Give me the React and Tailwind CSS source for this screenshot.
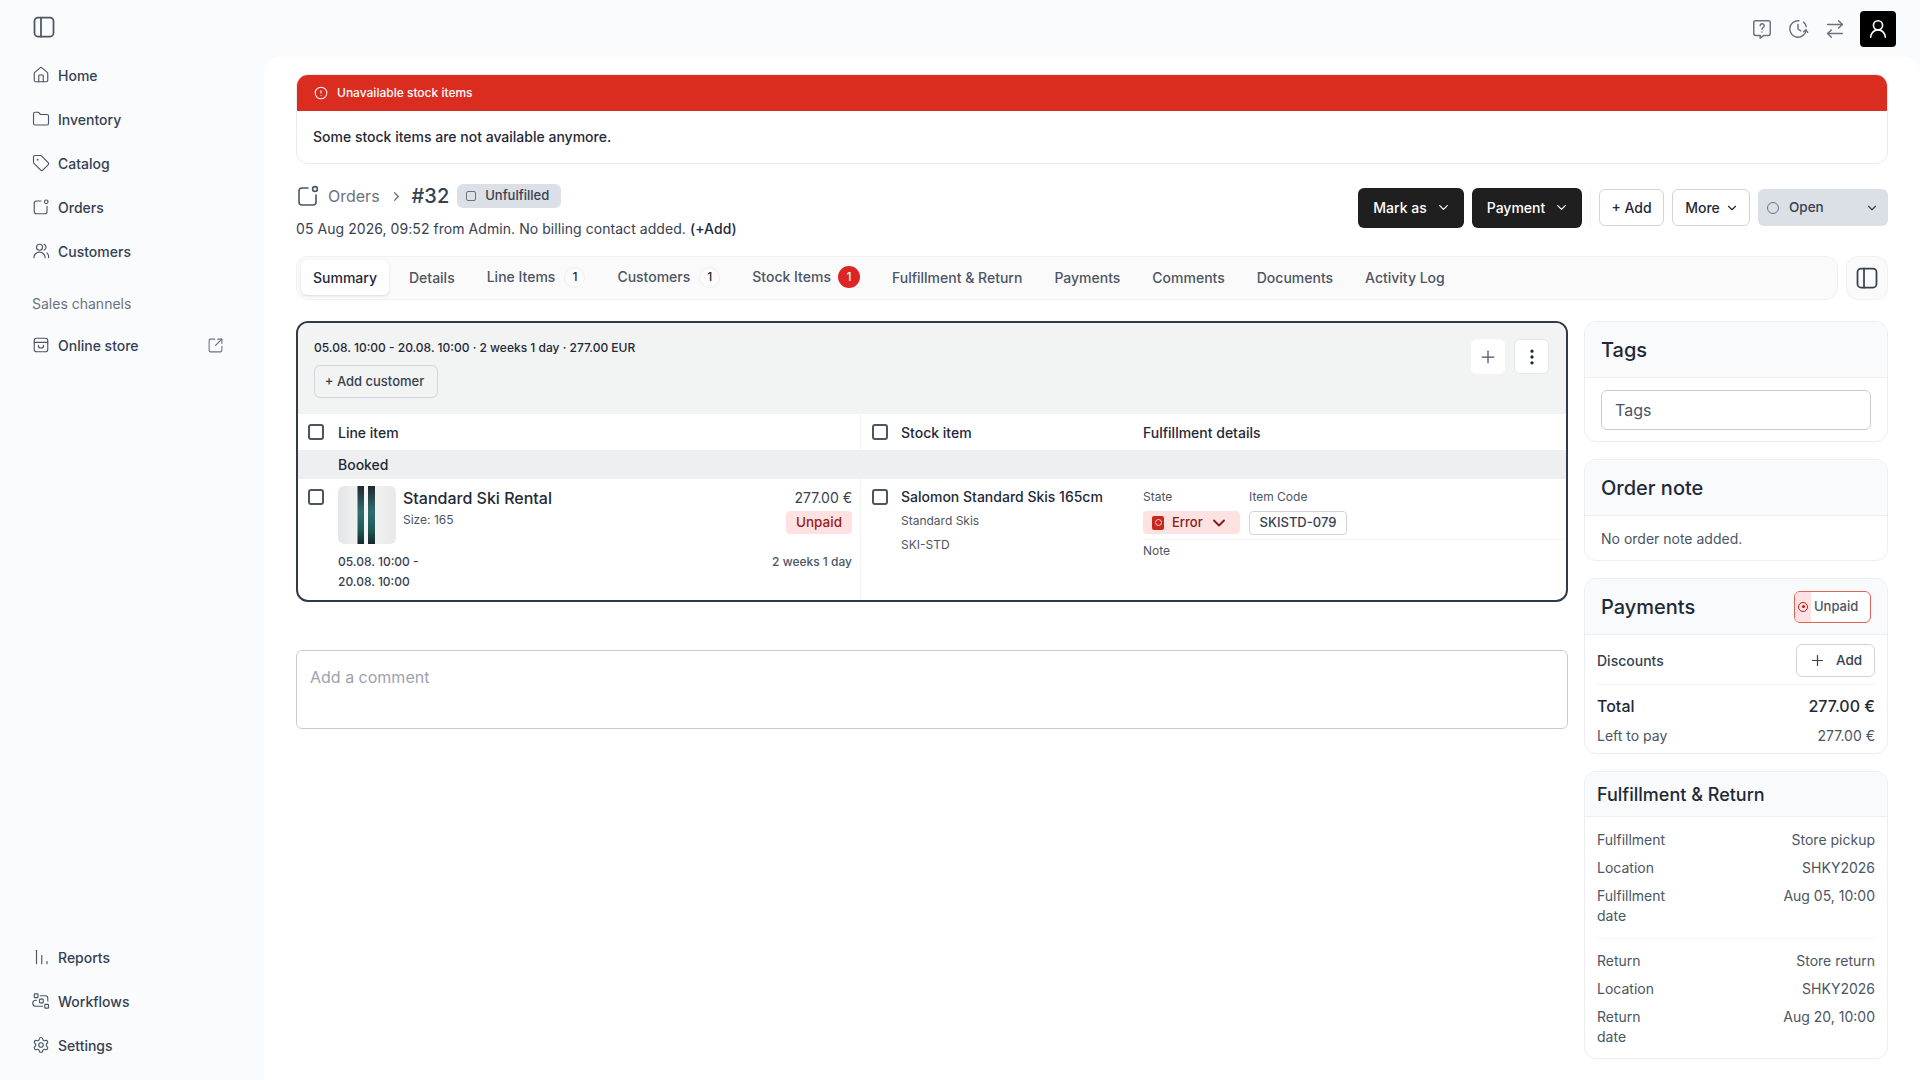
import React from "react";
import { Home, Folder, Tag, Settings, SquareArrowOutUpRight, ArrowRightLeft, UserRound, ChevronDown, ChevronRight, Plus, EllipsisVertical, CircleAlert } from "lucide-react";

const S = ({ size = 20, className = "", strokeWidth = 1.5, children }) => (
  <svg width={size} height={size} viewBox="0 0 24 24" fill="none" stroke="currentColor" strokeWidth={strokeWidth} strokeLinecap="round" strokeLinejoin="round" className={className}>{children}</svg>
);
const PanelIcon = ({ size = 24, className = "" }) => (
  <S size={size} strokeWidth={1.75} className={className}><rect x="2.5" y="2.5" width="19" height="19" rx="3.5" /><path d="M9 2.5v19" /></S>
);
const OrdersIcon = ({ size = 20, className = "", strokeWidth = 1.5 }) => (
  <S size={size} strokeWidth={strokeWidth} className={className}><path d="M12 4H6a3 3 0 0 0-3 3v11a3 3 0 0 0 3 3h11a3 3 0 0 0 3-3v-7" /><circle cx="19" cy="5" r="2.4" /></S>
);
const CustomersIcon = ({ size, className = "", strokeWidth }) => (
  <S size={size} strokeWidth={strokeWidth} className={className}><circle cx="10" cy="7" r="4" /><path d="M2.5 21a7.5 7.5 0 0 1 15 0" /><path d="M16 3.2a4 4 0 0 1 0 7.6" /><path d="M20 14.5a7.5 7.5 0 0 1 2 6.5" /></S>
);
const StoreIcon = ({ size, className = "", strokeWidth }) => (
  <S size={size} strokeWidth={strokeWidth} className={className}><rect x="3" y="3" width="18" height="18" rx="3" /><path d="M3 8.5h18" /><path d="M8.5 12.5a3.5 3.5 0 0 0 7 0" /></S>
);
const ReportsIcon = ({ size, className = "", strokeWidth }) => (
  <S size={size} strokeWidth={strokeWidth} className={className}><path d="M6 3v18" /><path d="M13 10v11" /><path d="M20 18v3" /></S>
);
const WorkflowsIcon = ({ size, className = "", strokeWidth }) => (
  <S size={size} strokeWidth={strokeWidth} className={className}><rect x="3" y="2.5" width="5" height="5" rx="1" /><rect x="10" y="9.5" width="5" height="5" rx="1" /><rect x="17" y="16.5" width="5" height="5" rx="1" /><path d="M11 5h7a3 3 0 0 1 3 3v4" /><path d="M6 11H5a3 3 0 0 0 0 8h9" /></S>
);
const HelpIcon = ({ className = "" }) => (
  <S size={22} strokeWidth={1.6} className={className}><path d="M5 3h14a2 2 0 0 1 2 2v12a2 2 0 0 1-2 2h-5l-4 3v-3H5a2 2 0 0 1-2-2V5a2 2 0 0 1 2-2z" /><path d="M10 8.5a2.2 2.2 0 1 1 3.2 2c-.8.4-1.2.9-1.2 1.7" /><path d="M12 15.2h.01" /></S>
);
const ClockIcon = ({ className = "" }) => (
  <S size={22} strokeWidth={1.6} className={className}><path d="M21 13a9 9 0 1 1-8-10" /><path d="M12 7v5l3 2" /><path d="M18 4.5a9 9 0 0 1 3 5" /><path d="M22.5 15.5l-2-2.5-2.5 2" /></S>
);

const NavItem = ({ icon: I, children, right }) => (
  <div className="h-[44px] flex items-center justify-between text-[14px] font-medium text-[#374151]">
    <div className="flex items-center gap-[8px]">
      <I size={18} strokeWidth={1.5} className="text-[#4b5563]" />
      <span>{children}</span>
    </div>
    {right}
  </div>
);

const Check = () => <span className="block w-[16px] h-[16px] shrink-0 rounded-[3px] border-2 border-[#4b5563] bg-white" />;

const Sidebar = () => (
  <aside className="w-[264px] shrink-0 h-full flex flex-col pb-[13px]">
    <div className="h-[53px] flex items-center pl-[32px]"><PanelIcon className="text-[#4b5563]" /></div>
    <nav className="pl-[32px] pr-[40px]">
      <NavItem icon={Home}>Home</NavItem>
      <NavItem icon={Folder}>Inventory</NavItem>
      <NavItem icon={Tag}>Catalog</NavItem>
      <NavItem icon={OrdersIcon}>Orders</NavItem>
      <NavItem icon={CustomersIcon}>Customers</NavItem>
      <div className="mt-[16px] h-[28px] flex items-center text-[14px] text-[#6b7280]">Sales channels</div>
      <div className="mt-[6px]">
        <NavItem icon={StoreIcon} right={<SquareArrowOutUpRight size={17} strokeWidth={1.5} className="text-[#6b7280]" />}>Online store</NavItem>
      </div>
    </nav>
    <nav className="mt-auto pl-[32px] pr-[40px]">
      <NavItem icon={ReportsIcon}>Reports</NavItem>
      <NavItem icon={WorkflowsIcon}>Workflows</NavItem>
      <NavItem icon={Settings}>Settings</NavItem>
    </nav>
  </aside>
);

const TopBar = () => (
  <header className="h-[57px] shrink-0 flex items-center justify-end pr-[24px] gap-[14.5px] text-[#6b7280]">
    <HelpIcon />
    <ClockIcon />
    <ArrowRightLeft size={22} strokeWidth={1.6} />
    <div className="w-[36px] h-[36px] bg-black rounded-[4px] flex items-center justify-center text-white">
      <UserRound size={22} strokeWidth={1.75} />
    </div>
  </header>
);

const Alert = () => (
  <section className="h-[90px] rounded-xl border border-[#e9ebee] overflow-hidden">
    <div className="h-[36px] bg-[#da2d20] text-white text-[12px] font-medium flex items-center gap-[9px] pl-[17px]">
      <CircleAlert size={14} strokeWidth={1.75} />
      <span>Unavailable stock items</span>
    </div>
    <p className="pl-[16px] pt-[16px] text-[14px] font-medium leading-[20px] text-[#1f2937]">Some stock items are not available anymore.</p>
  </section>
);

const Btn = ({ className = "", children }) => (
  <div className={"flex items-center justify-center text-[14px] font-medium rounded-[6px] " + className}>{children}</div>
);

const PageHead = () => (
  <div className="mt-[20px] flex justify-between items-start h-[55px]">
    <div>
      <div className="h-[24px] flex items-center">
        <OrdersIcon size={24} strokeWidth={1.6} className="text-[#4b5563] mr-[8px]" />
        <span className="text-[16px] text-[#6b7280]">Orders</span>
        <ChevronRight size={15} className="text-[#6b7280] ml-[9px] mr-[8px]" />
        <span className="text-[20px] font-medium text-[#374151]">#32</span>
        <span className="ml-[8px] h-[24px] w-[104px] rounded-[6px] bg-[#dbdfe6] flex items-center pl-[9px] gap-[9px] text-[13px] font-medium text-[#374151]">
          <span className="w-[10px] h-[10px] rounded-[2px] border border-[#6b7280]" />
          Unfulfilled
        </span>
      </div>
      <p className="mt-[11px] text-[14px] leading-[20px] tracking-[0.06px] text-[#374151]">05 Aug 2026, 09:52 from Admin. No billing contact added. <span className="font-medium text-[#1f2937]">(+Add)</span></p>
    </div>
    <div className="flex items-center gap-[8px] pt-[3.5px]">
      <Btn className="w-[106px] h-[40px] pl-[2px] gap-[9px] bg-[#1f1f1f] text-white">Mark as <ChevronDown size={15} /></Btn>
      <Btn className="w-[110px] h-[40px] pl-[2px] gap-[9px] bg-[#1f1f1f] text-white">Payment <ChevronDown size={15} /></Btn>
      <span className="w-px h-[37px] bg-[#f3f4f6]" />
      <Btn className="w-[65px] h-[37px] bg-white border border-[#d1d5db] text-[#1f2937]">+ Add</Btn>
      <Btn className="w-[78px] h-[37px] pl-[2px] gap-[5px] bg-white border border-[#d1d5db] text-[#1f2937]">More <ChevronDown size={14} /></Btn>
      <div className="w-[130px] h-[37px] rounded-[6px] bg-[#dbdfe6] flex items-center pl-[9px] pr-[9px] text-[14px] font-medium text-[#374151]">
        <span className="w-[12px] h-[12px] rounded-full border border-[#6b7280]" />
        <span className="ml-[10px] text-[13.5px]">Open</span>
        <ChevronDown size={14} className="ml-auto" />
      </div>
    </div>
  </div>
);

const Tab = ({ children, active, badge, red }) => (
  <div className={"mb-[2px] h-[35px] px-[12px] rounded-[6px] flex items-center text-[14px] font-medium whitespace-nowrap " + (active ? "bg-white shadow-sm text-[#1f2937]" : "text-[#4b5563]")}>
    <span className={badge ? "pb-[2px]" : ""}>{children}</span>
    {badge && (
      <span className={"flex items-center justify-center rounded-full text-[12px] font-medium " + (red ? "ml-[7px] w-[22px] h-[22px] bg-[#dc2626] text-white" : "ml-[9px] w-[21px] h-[21px] bg-[#fbfbfb] border border-[#f0f0f0] text-[#1f2937]")}>{badge}</span>
    )}
  </div>
);

const Tabs = () => (
  <div className="mt-[17px] flex gap-[8px]">
    <div className="flex-1 h-[44px] rounded-xl border border-[#f0f1f2] bg-[#fafafa] flex items-center gap-[8px] pl-[4px]">
      <Tab active>Summary</Tab>
      <Tab>Details</Tab>
      <Tab badge="1">Line Items</Tab>
      <Tab badge="1">Customers</Tab>
      <Tab badge="1" red>Stock Items</Tab>
      <Tab>Fulfillment &amp; Return</Tab>
      <Tab>Payments</Tab>
      <Tab>Comments</Tab>
      <Tab>Documents</Tab>
      <Tab>Activity Log</Tab>
    </div>
    <div className="w-[42px] h-[44px] rounded-xl border border-[#f0f1f2] bg-[#fafafa] flex items-center justify-center">
      <PanelIcon className="text-[#374151]" />
    </div>
  </div>
);

const Thumb = () => (
  <svg width="58" height="58" viewBox="0 0 58 58" className="rounded-[6px] shrink-0">
    <defs>
      <linearGradient id="thumbbg" x1="0" x2="1" y1="0" y2="0"><stop offset="0" stopColor="#e4e5e6" /><stop offset="0.5" stopColor="#f6f6f6" /><stop offset="1" stopColor="#e8e8e8" /></linearGradient>
      <linearGradient id="ski" x1="0" x2="0" y1="0" y2="1"><stop offset="0" stopColor="#1f2a2c" /><stop offset="0.45" stopColor="#2f6e70" /><stop offset="0.75" stopColor="#1f5a58" /><stop offset="1" stopColor="#15282a" /></linearGradient>
    </defs>
    <rect width="58" height="58" fill="url(#thumbbg)" />
    <rect x="19.5" width="6.5" height="58" fill="url(#ski)" />
    <rect x="30" width="7" height="58" fill="url(#ski)" />
  </svg>
);

const OrderCard = () => (
  <section className="rounded-xl border-2 border-[#2f3c47] overflow-hidden">
    <div className="h-[91px] bg-[#f2f3f3] flex justify-between pl-[16px] pr-[17px] pt-[16px]">
      <div>
        <p className="pt-[1px] text-[12px] leading-[16px] font-medium text-[#1f2937]">05.08. 10:00 - 20.08. 10:00 · 2 weeks 1 day · 277.00 EUR</p>
        <div className="mt-[9px] w-[124px] h-[33px] pr-[3px] rounded-[6px] border border-[#d1d5db] flex items-center justify-center text-[13px] font-medium text-[#374151]">+ Add customer</div>
      </div>
      <div className="flex gap-[9px]">
        <div className="w-[34px] h-[35px] rounded-[6px] bg-white flex items-center justify-center text-[#4b5563]"><Plus size={20} strokeWidth={1.5} /></div>
        <div className="w-[35px] h-[35px] rounded-[6px] bg-white border border-[#e5e7eb] flex items-center justify-center text-[#1f2937]"><EllipsisVertical size={20} /></div>
      </div>
    </div>
    <div className="grid grid-cols-[563px_1fr] h-[36px] text-[14px] font-medium text-[#1f2937]">
      <div className="border-r border-[#f3f4f6] flex items-center pl-[10px] gap-[14px]"><Check />Line item</div>
      <div className="grid grid-cols-[282px_1fr]">
        <div className="flex items-center pl-[11px] gap-[13px]"><Check />Stock item</div>
        <div className="flex items-center">Fulfillment details</div>
      </div>
    </div>
    <div className="h-[29px] bg-[#eeeff0] pl-[40px] flex items-center text-[14px] font-medium text-[#1f2937]">Booked</div>
    <div className="grid grid-cols-[563px_1fr] h-[121px]">
      <div className="border-r border-[#f3f4f6] flex pl-[10px] pr-[8px] gap-[14px]">
        <div className="pt-[10px]"><Check /></div>
        <div className="flex-1 pt-[7px]">
          <div className="flex justify-between">
            <div className="flex gap-[7px]">
              <Thumb />
              <div>
                <p className="text-[16px] font-medium leading-[24px] text-[#1f2937]">Standard Ski Rental</p>
                <p className="mt-[2px] text-[12px] leading-[16px] text-[#4b5563]">Size: 165</p>
              </div>
            </div>
            <div className="flex flex-col items-end">
              <p className="pt-[2px] text-[14px] leading-[20px] text-[#374151]">277.00 €</p>
              <span className="mt-[3px] w-[66px] h-[23px] rounded-[4px] bg-[#fee2e2] flex items-center justify-center text-[13.5px] font-medium text-[#991b1b]">Unpaid</span>
            </div>
          </div>
          <div className="mt-[8px] flex justify-between text-[12px] leading-[20px] font-medium">
            <p className="text-[#374151] w-[100px]">05.08. 10:00 - 20.08. 10:00</p>
            <p className="text-[#4b5563]">2 weeks 1 day</p>
          </div>
        </div>
      </div>
      <div className="grid grid-cols-[282px_1fr]">
        <div className="flex pl-[11px] pt-[10px] gap-[13px]">
          <Check />
          <div>
            <p className="-mt-[2px] text-[14px] leading-[20px] font-medium text-[#1f2937]">Salomon Standard Skis 165cm</p>
            <p className="mt-[4px] text-[12px] leading-[20px] text-[#4b5563]">Standard Skis</p>
            <p className="mt-[4px] text-[12px] leading-[20px] text-[#4b5563]">SKI-STD</p>
          </div>
        </div>
        <div className="pt-[10px]">
          <div className="flex gap-[9px] pb-[4px] border-b border-[#f3f4f6]">
            <div>
              <p className="text-[12px] leading-[16px] text-[#4b5563]">State</p>
              <div className="mt-[6px] w-[97px] h-[23px] rounded-[4px] bg-[#fee2e2] flex items-center pl-[9px] text-[13px] font-medium text-[#7f1d1d]">
                <span className="w-[12px] h-[14px] rounded-[2px] bg-[#c52a20] flex items-center justify-center"><span className="w-[7px] h-[7px] rounded-full border border-[#fecaca]" /></span>
                <span className="ml-[8px]">Error</span>
                <ChevronDown size={20} strokeWidth={2.25} className="ml-[6px]" />
              </div>
            </div>
            <div>
              <p className="text-[12px] leading-[16px] text-[#4b5563]">Item Code</p>
              <div className="mt-[6px] w-[98px] h-[24px] rounded-[4px] border border-[#d1d5db] flex items-center justify-center text-[13px] font-medium text-[#374151]">SKISTD-079</div>
            </div>
          </div>
          <p className="mt-[3px] text-[12px] leading-[16px] text-[#4b5563]">Note</p>
        </div>
      </div>
    </div>
  </section>
);

const Card = ({ title, titleClass = "", headRight, headH, children }) => (
  <section className="rounded-xl border border-[#eceef0] overflow-hidden">
    <div className={"bg-[#f9fafb] border-b border-[#eceef0] flex items-center justify-between box-content " + headH + " " + titleClass}>
      <h3 className="text-[#1f2937]">{title}</h3>
      {headRight}
    </div>
    {children}
  </section>
);

const Row = ({ label, value }) => (
  <div className="flex justify-between text-[14px] leading-[20px] text-[#4b5563]">
    <span className="w-[75px]">{label}</span>
    <span>{value}</span>
  </div>
);

const RightCol = () => (
  <aside className="w-[304px] shrink-0 flex flex-col gap-[17px]">
    <Card title="Tags" headH="h-[55px]" titleClass="pl-[16px] text-[20px] font-medium">
      <div className="px-[16px] pt-[12px] pb-[11px]">
        <div className="h-[40px] rounded-[6px] border border-[#c9cdd2] flex items-center pl-[13px] text-[16px] text-[#4b5563]">Tags</div>
      </div>
    </Card>
    <Card title="Order note" headH="h-[55px]" titleClass="pl-[16px] text-[20px] font-medium">
      <p className="pl-[16px] pt-[13px] pb-[11px] text-[14px] leading-[20px] text-[#4b5563]">No order note added.</p>
    </Card>
    <Card title="Payments" headH="h-[55px]" titleClass="pl-[16px] pr-[16px] text-[20px] font-medium" headRight={
      <span className="w-[77px] h-[32px] rounded-[6px] border border-[#e0605a] bg-white flex items-center overflow-hidden text-[13px] font-medium text-[#4b5563]">
        <span className="w-[16px] h-full bg-[#fee2e2] flex items-center justify-center text-[#b91c1c] shrink-0"><span className="w-[10px] h-[10px] rounded-full border border-[#b91c1c] flex items-center justify-center"><span className="w-[3px] h-[3px] rounded-full bg-[#b91c1c]" /></span></span>
        <span className="ml-[3px]">Unpaid</span>
      </span>
    }>
      <div className="px-[12px]">
        <div className="h-[50px] flex items-center justify-between border-b border-[#f3f4f6] pt-[1px]">
          <span className="text-[14px] font-medium text-[#374151]">Discounts</span>
          <div className="w-[79px] h-[33px] rounded-[6px] border border-[#d1d5db] flex items-center justify-center gap-[10px] text-[13.5px] font-medium text-[#374151]"><Plus size={17} strokeWidth={1.75} />Add</div>
        </div>
        <div className="mt-[9px] h-[24px] flex items-center justify-between text-[16px] font-medium text-[#1f2937]"><span>Total</span><span>277.00 €</span></div>
        <div className="mt-[8px] pb-[7px] flex justify-between text-[14px] leading-[20px] text-[#4b5563]"><span>Left to pay</span><span>277.00 €</span></div>
      </div>
    </Card>
    <Card title="Fulfillment & Return" headH="h-[44px]" titleClass="pl-[12px] text-[18px] font-medium">
      <div className="px-[12px] pt-[13px] pb-[11px]">
        <div className="flex flex-col gap-[8px] pb-[12px] border-b border-[#f3f4f6]">
          <Row label="Fulfillment" value="Store pickup" />
          <Row label="Location" value="SHKY2026" />
          <Row label="Fulfillment date" value="Aug 05, 10:00" />
        </div>
        <div className="flex flex-col gap-[8px] pt-[12px]">
          <Row label="Return" value="Store return" />
          <Row label="Location" value="SHKY2026" />
          <Row label="Return date" value="Aug 20, 10:00" />
        </div>
      </div>
    </Card>
  </aside>
);

export default function App() {
  return (
    <div className="w-[1920px] h-[1080px] overflow-hidden flex bg-[#f9fbfd] font-['Inter',sans-serif]">
      <Sidebar />
      <div className="flex-1 h-full flex flex-col">
        <TopBar />
        <main className="flex-1 bg-white rounded-t-2xl px-[32px] pt-[17px]">
          <Alert />
          <PageHead />
          <Tabs />
          <div className="mt-[21px] flex gap-[16px] items-start">
            <div className="flex-1">
              <OrderCard />
              <div className="mt-[48px] h-[79px] rounded-[6px] border border-[#c9cdd2] pl-[13px] pt-[14px] text-[16px] text-[#9ca3af]">Add a comment</div>
            </div>
            <RightCol />
          </div>
        </main>
      </div>
    </div>
  );
}
